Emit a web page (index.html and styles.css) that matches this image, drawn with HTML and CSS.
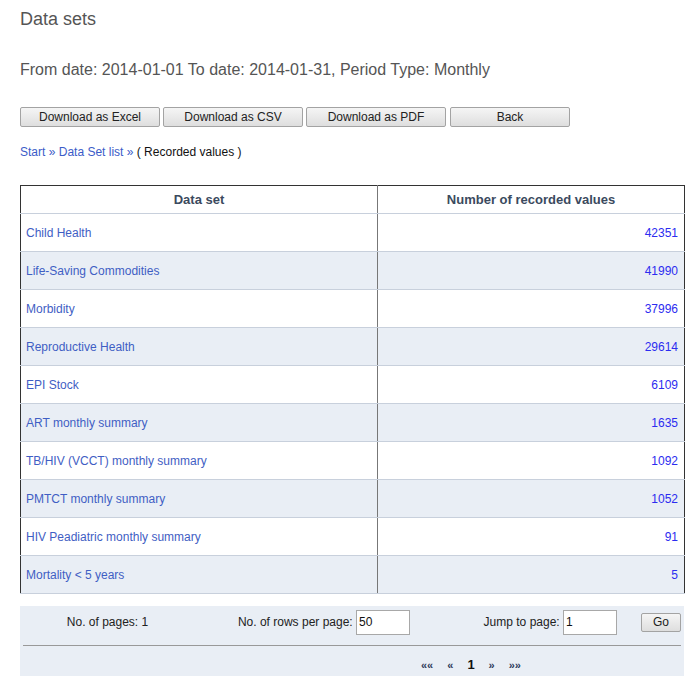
FILE: index.html
```html
<!DOCTYPE html>
<html>
<head>
<meta charset="utf-8">
<link rel="stylesheet" href="styles.css">
</head>
<body>
<div class="page">
  <h1 class="title">Data sets</h1>
  <h2 class="subtitle">From date: 2014-01-01 To date: 2014-01-31, Period Type: Monthly</h2>
  <div class="buttons">
    <button class="btn">Download as Excel</button>
    <button class="btn">Download as CSV</button>
    <button class="btn">Download as PDF</button>
    <button class="btn btn-back">Back</button>
  </div>
  <div class="crumbs"><a href="#">Start</a> <span class="sep">»</span> <a href="#">Data Set list</a> <span class="sep">»</span> ( Recorded values )</div>
  <table class="grid">
    <thead>
      <tr><th class="c1">Data set</th><th class="c2">Number of recorded values</th></tr>
    </thead>
    <tbody>
      <tr><td class="c1"><a href="#">Child Health</a></td><td class="c2 num"><a href="#">42351</a></td></tr>
      <tr class="alt"><td class="c1"><a href="#">Life-Saving Commodities</a></td><td class="c2 num"><a href="#">41990</a></td></tr>
      <tr><td class="c1"><a href="#">Morbidity</a></td><td class="c2 num"><a href="#">37996</a></td></tr>
      <tr class="alt"><td class="c1"><a href="#">Reproductive Health</a></td><td class="c2 num"><a href="#">29614</a></td></tr>
      <tr><td class="c1"><a href="#">EPI Stock</a></td><td class="c2 num"><a href="#">6109</a></td></tr>
      <tr class="alt"><td class="c1"><a href="#">ART monthly summary</a></td><td class="c2 num"><a href="#">1635</a></td></tr>
      <tr><td class="c1"><a href="#">TB/HIV (VCCT) monthly summary</a></td><td class="c2 num"><a href="#">1092</a></td></tr>
      <tr class="alt"><td class="c1"><a href="#">PMTCT monthly summary</a></td><td class="c2 num"><a href="#">1052</a></td></tr>
      <tr><td class="c1"><a href="#">HIV Peadiatric monthly summary</a></td><td class="c2 num"><a href="#">91</a></td></tr>
      <tr class="alt"><td class="c1"><a href="#">Mortality &lt; 5 years</a></td><td class="c2 num"><a href="#">5</a></td></tr>
    </tbody>
  </table>
  <div class="pager">
    <div class="pager-top">
      <div class="pg-count">No. of pages: 1</div>
      <div class="pg-rows">No. of rows per page: <input class="pg-input" type="text" value="50"></div>
      <div class="pg-jump">Jump to page: <input class="pg-input" type="text" value="1"></div>
      <div class="pg-go"><button class="btn btn-go">Go</button></div>
    </div>
    <div class="pager-nav">
      <span class="nav-arrow">««</span>
      <span class="nav-arrow">«</span>
      <span class="nav-cur">1</span>
      <span class="nav-arrow">»</span>
      <span class="nav-arrow">»»</span>
    </div>
  </div>
</div>
</body>
</html>
```
FILE: styles.css
```css
html, body {
  margin: 0;
  padding: 0;
  background: #fff;
}
body {
  font-family: "Liberation Sans", Arial, sans-serif;
  font-size: 12px;
  color: #222;
}
.page {
  padding: 8px 6px 0 20px;
}
.title {
  margin: 0;
  font-size: 18px;
  line-height: 22px;
  font-weight: normal;
  color: #555;
}
.subtitle {
  margin: 30px 0 0;
  font-size: 16px;
  line-height: 20px;
  font-weight: normal;
  color: #555;
}
.buttons {
  display: flex;
  gap: 3px;
  margin-top: 27px;
}
.btn {
  font-family: "Liberation Sans", Arial, sans-serif;
  font-size: 12px;
  color: #222;
  height: 20px;
  width: 140px;
  padding: 0;
  border: 1px solid #a3a3a3;
  border-radius: 2px;
  background: linear-gradient(#f5f5f5, #dedede);
}
.btn-back {
  width: 120px;
  margin-left: 1px;
}
.crumbs {
  margin-top: 18px;
  line-height: 15px;
  color: #111;
}
.crumbs a {
  color: #3b5cc8;
  text-decoration: none;
}
.crumbs .sep {
  color: #3b5cc8;
}
.grid {
  margin-top: 25px;
  width: 665px;
  border-collapse: collapse;
  border-top: 1px solid #333;
  border-left: 1px solid #333;
  border-right: 1px solid #333;
}
.grid th {
  height: 27px;
  padding: 0;
  font-size: 13px;
  font-weight: bold;
  color: #3b4a5e;
  text-align: center;
  border-bottom: 1px solid #c8d0dc;
}
.grid td {
  height: 37px;
  padding: 0 6px 0 5px;
  border-bottom: 1px solid #c8d0dc;
}
.grid .c1 {
  width: 345px;
  border-right: 1px solid #777;
  text-align: left;
}
.grid th.c1 {
  width: 356px;
  text-align: center;
}
.grid tr.alt td {
  background: #e9eef5;
}
.grid td a {
  color: #3f5ec4;
  text-decoration: none;
}
.grid td.num {
  text-align: right;
}
.grid td.num a {
  color: #2c2cf0;
}
.pager {
  margin-top: 12px;
  width: 664px;
  background: #e9eef5;
  padding: 3px 3px 0;
  box-sizing: border-box;
  height: 70px;
}
.pager-top {
  display: grid;
  grid-template-columns: 169px 218px 207px 1fr;
  align-items: center;
  height: 26px;
  padding-bottom: 10px;
  border-bottom: 1px solid #999;
}
.pg-count {
  text-align: center;
}
.pg-rows, .pg-jump {
  text-align: right;
}
.pg-go {
  text-align: right;
}
.pg-input {
  font-family: "Liberation Sans", Arial, sans-serif;
  font-size: 12px;
  width: 54px;
  height: 25px;
  box-sizing: border-box;
  border: 1px solid #a8a8a8;
  padding: 0 2px;
  vertical-align: middle;
  background: #fff;
  color: #111;
}
.btn-go {
  width: 40px;
  height: 19px;
}
.pager-nav {
  display: flex;
  align-items: center;
  height: 21px;
  padding-top: 8px;
  padding-left: 398px;
}
.nav-arrow {
  font-size: 11px;
  font-weight: bold;
  color: #2d3a5a;
  margin-right: 14px;
}
.nav-cur {
  font-size: 13px;
  font-weight: bold;
  color: #111;
  margin-right: 14px;
}
```
